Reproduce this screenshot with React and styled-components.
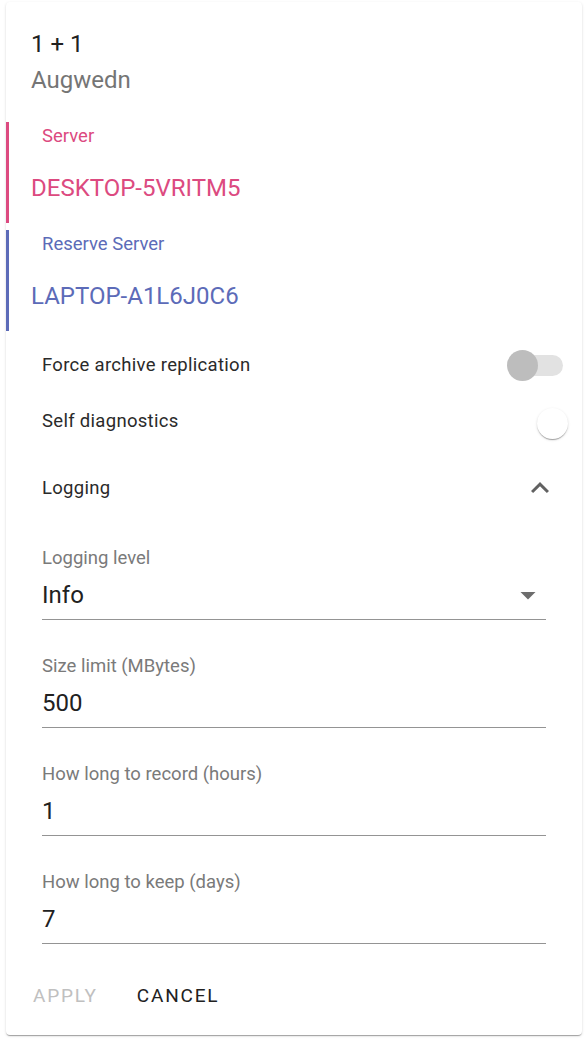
import styled, { createGlobalStyle } from "styled-components";

const GlobalStyle = createGlobalStyle`
  body {
    margin: 0;
    background: #ffffff;
    font-family: Roboto, "Liberation Sans", sans-serif;
  }
`;

const Page = styled.div`
  padding: 2px 3px 5px 6px;
`;

const Card = styled.div`
  background: #fff;
  border-radius: 4px;
  box-shadow: 0 2px 1px -1px rgba(0, 0, 0, 0.2), 0 1px 1px 0 rgba(0, 0, 0, 0.14),
    0 1px 3px 0 rgba(0, 0, 0, 0.12);
  padding: 24px 0 22px;
  display: flex;
  flex-direction: column;
`;

const Header = styled.div`
  padding: 0 25px;
  margin-bottom: 24px;
`;

const Title = styled.div`
  font-size: 24px;
  line-height: 36px;
  color: #212121;
`;

const Subtitle = styled.div`
  font-size: 24px;
  line-height: 36px;
  color: #757575;
`;

const ServerBlock = styled.div`
  border-left: 3px solid ${({ color }) => color};
  color: ${({ color }) => color};
  padding: 0 22px 17px;
  margin-bottom: ${({ gap }) => gap || 0}px;
`;

const ServerLabel = styled.div`
  font-size: 18.5px;
  line-height: 28px;
  padding-left: 11px;
`;

const ServerValue = styled.div`
  font-size: 24px;
  line-height: 36px;
  margin-top: 20px;
`;

const Options = styled.div`
  margin-top: 6px;
  padding: 0 14px 0 36px;
`;

const OptionRow = styled.div`
  display: flex;
  align-items: center;
  justify-content: space-between;
  height: ${({ h }) => h || 56}px;
`;

const OptionText = styled.span`
  font-size: 18.5px;
  color: #2a2a2a;
  letter-spacing: 0.3px;
`;

const SwitchRoot = styled.div`
  position: relative;
  width: 61px;
  height: 31px;
  margin-top: ${({ offset }) => offset || 0}px;
`;

const Track = styled.div`
  position: absolute;
  left: 0;
  top: 5px;
  width: 56px;
  height: 21px;
  border-radius: 11px;
  background: ${({ on }) => (on ? "transparent" : "#e2e2e2")};
`;

const Thumb = styled.div`
  position: absolute;
  top: 0;
  left: ${({ on }) => (on ? 30 : 0)}px;
  width: 31px;
  height: 31px;
  border-radius: 50%;
  background: ${({ on }) => (on ? "#ffffff" : "#bdbdbd")};
  box-shadow: ${({ on }) =>
    on
      ? "0 2px 1px -1px rgba(0,0,0,0.2), 0 1px 1px 0 rgba(0,0,0,0.14), 0 1px 3px 0 rgba(0,0,0,0.12)"
      : "none"};
`;

const IconBox = styled.div`
  width: 36px;
  height: 36px;
  margin-right: 10px;
  color: #616161;
  display: flex;
`;

const Fields = styled.div`
  padding: 19px 36px 0 36px;
  display: flex;
  flex-direction: column;
  gap: 34px;
`;

const Field = styled.div`
  display: flex;
  flex-direction: column;
`;

const FieldLabel = styled.div`
  font-size: 18.5px;
  line-height: 24px;
  color: #7a7a7a;
`;

const FieldInput = styled.div`
  margin-top: 7px;
  height: 36px;
  padding-bottom: 6px;
  border-bottom: 1px solid #949494;
  display: flex;
  align-items: center;
  justify-content: space-between;
  font-size: 24px;
  color: #212121;
`;

const Arrow = styled.svg`
  width: 36px;
  height: 36px;
  color: #6d6d6d;
`;

const Actions = styled.div`
  display: flex;
  gap: 27px;
  padding: 33px 0 0 21px;
`;

const Button = styled.button`
  border: none;
  background: transparent;
  font-family: Roboto, "Liberation Sans", sans-serif;
  font-size: 19px;
  letter-spacing: 1.8px;
  text-transform: uppercase;
  height: 36px;
  padding: 0 6px;
  color: ${({ disabled }) => (disabled ? "#c0c0c0" : "#212121")};
`;

const Switch = ({ on, offset }) => (
  <SwitchRoot offset={offset}>
    <Track on={on} />
    <Thumb on={on} />
  </SwitchRoot>
);

const fields = [
  { label: "Size limit (MBytes)", value: "500" },
  { label: "How long to record (hours)", value: "1" },
  { label: "How long to keep (days)", value: "7" },
];

export default function App() {
  return (
    <Page>
      <GlobalStyle />
      <Card>
        <Header>
          <Title>1 + 1</Title>
          <Subtitle>Augwedn</Subtitle>
        </Header>

        <ServerBlock color="#dc4a80" gap={7}>
          <ServerLabel>Server</ServerLabel>
          <ServerValue>DESKTOP-5VRITM5</ServerValue>
        </ServerBlock>
        <ServerBlock color="#5c6bb8">
          <ServerLabel>Reserve Server</ServerLabel>
          <ServerValue>LAPTOP-A1L6J0C6</ServerValue>
        </ServerBlock>

        <Options>
          <OptionRow>
            <OptionText>Force archive replication</OptionText>
            <Switch on={false} />
          </OptionRow>
          <OptionRow>
            <OptionText>Self diagnostics</OptionText>
            <Switch on offset={4} />
          </OptionRow>
          <OptionRow h={78}>
            <OptionText>Logging</OptionText>
            <IconBox>
              <svg viewBox="0 0 24 24" width="36" height="36" fill="currentColor">
                <path d="M12 8l-6 6 1.41 1.41L12 10.83l4.59 4.58L18 14z" />
              </svg>
            </IconBox>
          </OptionRow>
        </Options>

        <Fields>
          <Field>
            <FieldLabel>Logging level</FieldLabel>
            <FieldInput>
              <span>Info</span>
              <Arrow viewBox="0 0 24 24" fill="currentColor">
                <path d="M7 10l5 5 5-5z" />
              </Arrow>
            </FieldInput>
          </Field>
          {fields.map((f) => (
            <Field key={f.label}>
              <FieldLabel>{f.label}</FieldLabel>
              <FieldInput>{f.value}</FieldInput>
            </Field>
          ))}
        </Fields>

        <Actions>
          <Button disabled>Apply</Button>
          <Button>Cancel</Button>
        </Actions>
      </Card>
    </Page>
  );
}
